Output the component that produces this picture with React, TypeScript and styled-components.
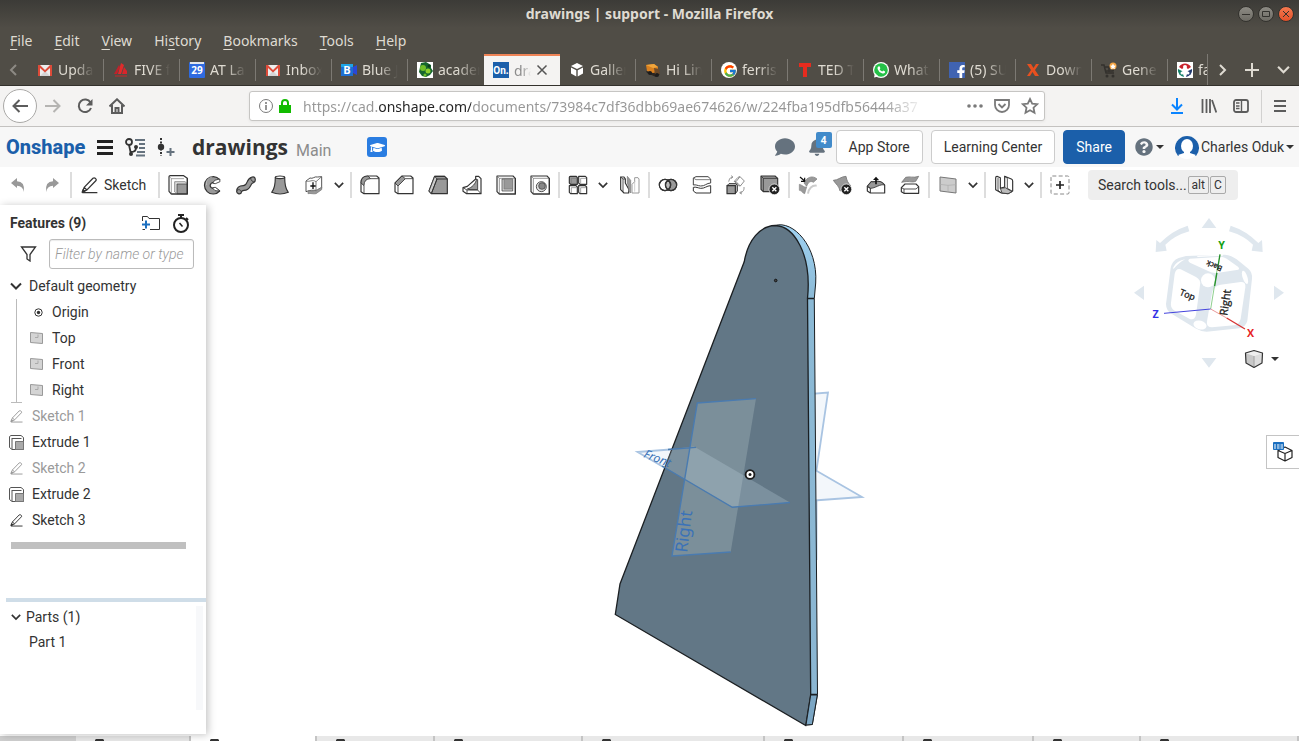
import React from 'react';
import styled, { createGlobalStyle } from 'styled-components';
import { FaBell, FaComment, FaFacebookF, FaGraduationCap, FaQuestionCircle } from 'react-icons/fa';
import { FcGoogle } from 'react-icons/fc';

const chromeFont = `'Noto Sans', 'Open Sans', sans-serif`;
const appFont = `Roboto, 'Liberation Sans', sans-serif`;

const GlobalStyle = createGlobalStyle`
  * { box-sizing: border-box; }
  body { margin: 0; background: #fff; }
  button, input { font: inherit; color: inherit; }
  button { border: 0; padding: 0; background: none; cursor: pointer; }
  svg { display: block; flex: none; }
`;

const Page = styled.div`
  display: flex;
  flex-direction: column;
  height: 100vh;
  overflow: hidden;
  font-family: ${appFont};
  font-size: 14px;
  color: #333;
`;

/* ---------- Browser window ---------- */

const BrowserFrame = styled.div`
  flex: none;
  font-family: ${chromeFont};
  font-size: 14px;
  color: #dfdbd2;
  background: linear-gradient(#3c3b37 0, #504d46 28px);
`;

const TitleBar = styled.header`
  display: grid;
  grid-template-columns: 1fr auto 1fr;
  align-items: center;
  height: 28px;
  padding: 0 5px;
`;

const WindowTitle = styled.h1`
  grid-column: 2;
  margin: 0;
  font-size: 14px;
  font-weight: 700;
  line-height: 28px;
`;

const WindowButtons = styled.div`
  display: flex;
  justify-content: flex-end;
  gap: 4px;
`;

const WindowButton = styled.button<{ $close?: boolean }>`
  display: grid;
  place-items: center;
  width: 16px;
  height: 16px;
  border: 1px solid #33322e;
  border-radius: 50%;
  color: #33322e;
  background: ${(p) => (p.$close ? 'linear-gradient(#f4794f, #e2512a)' : 'linear-gradient(#8d8b84, #6d6b64)')};
`;

const MenuBar = styled.nav`
  display: flex;
  align-items: center;
  gap: 22px;
  height: 26px;
  padding-left: 10px;
`;

const MenuButton = styled.button`
  line-height: 22px;
  u { text-underline-offset: 3px; }
`;

const TabStrip = styled.div`
  display: flex;
  height: 32px;
  border-bottom: 1px solid #33312c;
`;

const StripButton = styled.button<{ $width: number; $dim?: boolean }>`
  display: grid;
  flex: none;
  place-items: center;
  width: ${(p) => p.$width}px;
  color: ${(p) => (p.$dim ? '#8d8a84' : '#dfdbd2')};
`;

const TabList = styled.div`
  display: flex;
  flex: 1;
  min-width: 0;
  overflow: hidden;
  border-right: 1px solid #7c7973;
`;

const Tab = styled.button<{ $active?: boolean }>`
  display: flex;
  flex: none;
  align-items: center;
  gap: 5px;
  width: 76px;
  height: ${(p) => (p.$active ? '32px' : '31px')};
  padding: ${(p) => (p.$active ? '0 12px 0 9px' : '0 0 0 9px')};
  text-align: left;
  color: ${(p) => (p.$active ? '#8c8c8c' : '#dfdbd2')};
  background: ${(p) => (p.$active ? '#f4f3f2' : 'transparent')};
  box-shadow: ${(p) => (p.$active ? 'inset 0 2px #ef8457' : 'none')};
`;

const TabDivider = styled.span`
  flex: none;
  width: 1px;
  height: 22px;
  background: #7c7973;
`;

const TabLabel = styled.span<{ $active?: boolean }>`
  flex: 1;
  min-width: 0;
  overflow: hidden;
  margin-right: ${(p) => (p.$active ? 0 : 4)}px;
  white-space: nowrap;
  mask-image: linear-gradient(90deg, #000 45%, transparent 100%);
`;

const NavBar = styled.div`
  display: flex;
  align-items: center;
  height: 41px;
  padding: 0 3px;
  border-bottom: 1px solid #c4c2c0;
  color: #606060;
  background: #f4f3f2;
`;

const NavButton = styled.button<{ $accent?: boolean; $faint?: boolean }>`
  display: grid;
  place-items: center;
  width: 32px;
  height: 32px;
  color: ${(p) => (p.$accent ? '#0a84ff' : p.$faint ? '#b5b4b2' : '#5c5c5c')};
`;

const BackButton = styled(NavButton)`
  width: 34px;
  height: 34px;
  border: 1px solid #aaa9a7;
  border-radius: 50%;
  background: #fff;
`;

const AddressBar = styled.label`
  display: flex;
  flex: 1;
  align-items: center;
  gap: 5px;
  height: 30px;
  margin: 0 116px;
  padding: 0 5px 0 9px;
  border: 1px solid #c6c5c3;
  border-radius: 3px;
  color: #7a7a7a;
  background: #fff;
  box-shadow: 0 1px 3px rgba(0, 0, 0, 0.06);
`;

const AddressInput = styled.input`
  flex: 1;
  min-width: 0;
  margin-left: 6px;
  padding: 0;
  border: 0;
  outline: 0;
  font-size: 14px;
  background: linear-gradient(90deg, #969696 75px, #222 75px, #222 168px, #969696 168px, #969696 580px, transparent 622px);
  background-clip: text;
  -webkit-text-fill-color: transparent;
`;

const NavSeparator = styled.span`
  width: 1px;
  height: 33px;
  margin: 0 2px 0 4px;
  background: #d2d1d0;
`;

/* ---------- Document header ---------- */

const DocHeader = styled.header`
  display: flex;
  flex: none;
  align-items: center;
  height: 40px;
  padding: 0 5px 0 6px;
  background: #f7f7f7;
`;

const Brand = styled.a`
  width: 78px;
  font-size: 20px;
  font-weight: 800;
  line-height: 40px;
  color: #1b5faa;
  text-decoration: none;
`;

const HeaderButton = styled.button<{ $left: number; $color?: string }>`
  display: grid;
  place-items: center;
  margin-left: ${(p) => p.$left}px;
  color: ${(p) => p.$color ?? '#333'};
`;

const DocTitle = styled.h2`
  margin: 0 0 0 17px;
  font-family: 'Open Sans', sans-serif;
  font-size: 21px;
  font-weight: 700;
  line-height: 40px;
`;

const Workspace = styled.span`
  margin: 6px 0 0 8px;
  font-size: 16px;
  color: #8c8c8c;
`;

const LearnBadge = styled.button`
  display: grid;
  place-items: center;
  width: 20px;
  height: 20px;
  margin-left: 36px;
  border-radius: 3px;
  color: #fff;
  background: #2a7de1;
`;

const HeaderActions = styled.div`
  display: flex;
  align-items: center;
  margin-left: auto;
`;

const Notification = styled(HeaderButton)`
  position: relative;
  width: 17px;
  margin-right: 11px;
`;

const Count = styled.span`
  position: absolute;
  top: -6px;
  left: 8px;
  width: 16px;
  border-radius: 2px;
  font-family: 'Open Sans', sans-serif;
  font-size: 10px;
  font-weight: 700;
  line-height: 16px;
  text-align: center;
  color: #fff;
  background: #428bca;
`;

const ActionButton = styled.button<{ $primary?: boolean }>`
  height: 34px;
  margin-right: 8px;
  padding: 0 12px;
  border: 1px solid ${(p) => (p.$primary ? '#1b5faa' : '#ccc')};
  border-radius: 4px;
  color: ${(p) => (p.$primary ? '#fff' : '#333')};
  background: ${(p) => (p.$primary ? '#1b5faa' : '#fff')};
`;

const DropButton = styled.button<{ $gap: number }>`
  display: flex;
  align-items: center;
  gap: ${(p) => p.$gap}px;
  margin-left: 2px;
`;

const Caret = styled.span`
  border: 4px solid transparent;
  border-top-color: #333;
  border-bottom: 0;
`;

const AccountButton = styled(DropButton)`
  margin-left: 11px;
`;

/* ---------- Tool bar ---------- */

const ToolBar = styled.div`
  display: flex;
  flex: none;
  align-items: center;
  height: 38px;
  padding: 0 1px 2px;
  background: #fff;
`;

const ToolButton = styled.button`
  display: grid;
  place-items: center;
  width: 34px;
  height: 30px;
`;

const SketchButton = styled.button`
  display: flex;
  align-items: center;
  gap: 6px;
  width: 84px;
  height: 30px;
  padding-left: 8px;
`;

const MoreButton = styled.button`
  display: flex;
  align-items: center;
  width: 18px;
  height: 30px;
  padding-left: 3px;
`;

const ToolSeparator = styled.span`
  width: 2px;
  height: 26px;
  margin: 0 1px;
  background: #ddd;
`;

const SearchTools = styled.button`
  display: flex;
  align-items: center;
  gap: 1px;
  width: 150px;
  height: 30px;
  margin-left: 11px;
  padding-left: 10px;
  border-radius: 4px;
  background: #eee;
`;

const Key = styled.kbd`
  padding: 0 3px;
  border: 1px solid #aaa;
  border-radius: 2px;
  font-family: ${appFont};
  font-size: 12px;
  line-height: 16px;
`;

/* ---------- Model area ---------- */

const Main = styled.main`
  display: flex;
  flex: 1;
  min-height: 0;
`;

const SidePanel = styled.aside`
  z-index: 1;
  display: flex;
  flex: none;
  flex-direction: column;
  width: 206px;
  margin-bottom: 2px;
  background: #fff;
  box-shadow: 2px 1px 8px rgba(0, 0, 0, 0.24);
`;

const PanelHeader = styled.div`
  display: flex;
  align-items: center;
  gap: 10px;
  height: 34px;
  padding: 2px 16px 0 10px;
`;

const PanelTitle = styled.h3`
  flex: 1;
  margin: 0;
  font-size: 14px;
  font-weight: 700;
  line-height: 20px;
`;

const FilterRow = styled.label`
  display: flex;
  align-items: center;
  gap: 12px;
  padding: 0 12px 0 20px;
`;

const FilterInput = styled.input`
  flex: 1;
  min-width: 0;
  height: 30px;
  padding: 0 5px;
  border: 1px solid #bbb;
  border-radius: 3px;
  outline: 0;
  background: #fff;
  box-shadow: inset 0 1px 1px rgba(0, 0, 0, 0.08);
  &::placeholder { font-style: italic; font-weight: 300; color: #999; opacity: 1; }
`;

const FeatureTree = styled.div`
  flex: 1;
  min-height: 0;
  padding-top: 4px;
`;

const TreeRow = styled.button<{ $muted?: boolean; $indent?: number; $gap?: number }>`
  display: flex;
  align-items: center;
  gap: ${(p) => p.$gap ?? 8}px;
  width: 100%;
  height: 26px;
  padding-left: ${(p) => p.$indent ?? 8}px;
  text-align: left;
  color: ${(p) => (p.$muted ? '#9a9a9a' : '#333')};
`;

const IconSlot = styled.span`
  display: grid;
  place-items: center;
  width: 16px;
`;

const Branch = styled.div`
  display: flex;
  height: 104px;
`;

const BranchLine = styled.span`
  flex: none;
  width: 11px;
  height: 104px;
  margin-left: 11px;
  border-bottom: 1px solid #bbb;
  background: linear-gradient(#bbb, #bbb) 5px 0 / 1px 100% no-repeat;
`;

const BranchItems = styled.div`
  flex: 1;
`;

const RollbackBar = styled.div`
  height: 7px;
  margin: 9px 20px 0 11px;
  background: #c0c0c0;
`;

const PartsSection = styled.section`
  flex: none;
  display: flex;
  height: 136px;
  margin-left: 6px;
  padding: 4px 3px 24px 0;
  border-top: 4px solid #cfdde8;
`;

const PartsList = styled.div`
  flex: 1;
  margin-top: -2px;
`;

const PartRow = styled.button<{ $indent: number }>`
  display: flex;
  align-items: center;
  gap: 5px;
  height: 25px;
  padding-left: ${(p) => p.$indent}px;
`;

const ScrollTrack = styled.span`
  width: 7px;
  background: #f7f8fa;
`;

const Viewport = styled.section`
  position: relative;
  flex: 1;
  min-width: 0;
  background: #fff;
`;

const ModelCanvas = styled.svg`
  width: 100%;
  height: 100%;
  font-family: 'Noto Sans', sans-serif;
`;

const ViewControls = styled.div`
  position: absolute;
  top: 8px;
  right: 9px;
  display: flex;
  flex-direction: column;
  font-family: 'Open Sans', sans-serif;
`;

const DisplayButton = styled.button`
  display: flex;
  align-items: center;
  align-self: flex-end;
  gap: 7px;
  margin: -22px 11px 0 0;
`;

const TableButton = styled.button`
  position: absolute;
  top: 230px;
  right: 0;
  display: grid;
  place-items: center;
  width: 33px;
  height: 34px;
  border: 1px solid #c4c4c4;
  border-right: 0;
  background: #fff;
`;

const DocTabs = styled.nav`
  display: flex;
  flex: none;
  height: 5px;
  overflow: hidden;
  background: #e8e8e8;
`;

const DocTab = styled.button<{ $width: number; $active?: boolean }>`
  flex: 0 1 ${(p) => p.$width}px;
  display: flex;
  align-items: flex-start;
  padding: 3px 0 0 19px;
  border-right: 2px solid #c4c4c4;
  background: ${(p) => (p.$active ? '#fff' : '#e8e8e8')};
`;

const DocTabTools = styled.span`
  flex: none;
  width: 76px;
  background: #cfcfcf;
`;

/* ---------- Icons ---------- */

const Chevron = ({ dir = 'down', w = 12, sw = 2 }: { dir?: 'down' | 'left' | 'right'; w?: number; sw?: number }) => {
  const d = { down: 'M1 3.5L6 8.5L11 3.5', left: 'M8 1L3 6L8 11', right: 'M4 1L9 6L4 11' }[dir];
  return (
    <svg width={w} height={w} viewBox="0 0 12 12" fill="none" stroke="currentColor" strokeWidth={sw}>
      <path d={d} />
    </svg>
  );
};

const Fav = ({ children }: { children: React.ReactNode }) => (
  <svg width="16" height="16" viewBox="0 0 16 16">{children}</svg>
);

const favicons: Record<string, React.ReactNode> = {
  gmail: (
    <Fav>
      <rect x="1" y="3" width="14" height="11" fill="#eceded" />
      <path d="M3 14L8 9L13 14Z" fill="#d4d5d6" />
      <path d="M1 3h2l5 5 5-5h2v11h-2V6L8 10.500 3 6v8H1z" fill="#dd4b39" />
    </Fav>
  ),
  five: (
    <Fav>
      <path d="M1 12L6 3l1 2-3 7z" fill="#c2202a" />
      <path d="M5 12L8 1l3 2-3 9z" fill="#e02b2b" />
      <path d="M9 12l2-7 3 4v3z" fill="#d8252b" />
      <path d="M2 13h12v2H2z" fill="#8c3a38" />
    </Fav>
  ),
  cal: (
    <Fav>
      <rect width="16" height="16" rx="1" fill="#2f6be0" />
      <path d="M1 0h14v2H1z" fill="#e3e6ea" />
      <text x="8" y="12" fontSize="10" fontWeight="700" textAnchor="middle" fill="#fff" fontFamily="Open Sans">29</text>
    </Fav>
  ),
  blue: (
    <Fav>
      <rect y="2" width="12" height="12" fill="#1d6fd2" />
      <path d="M0 2h12v3H0z" fill="#1da5e8" />
      <path d="M12 5l4-2v10l-4-2z" fill="#2a48d8" />
      <text x="6" y="12" fontSize="11" fontWeight="700" textAnchor="middle" fill="#fff" fontFamily="Open Sans">B</text>
    </Fav>
  ),
  acad: (
    <Fav>
      <rect width="16" height="16" fill="#fff" />
      <path d="M4 1l5-1 5 3v3l2 3-3 4-4 2-4-1-3-4 1-5z" fill="#16662e" />
      <circle cx="6" cy="6" r="3" fill="#6fbe28" />
      <circle cx="11" cy="9" r="2.500" fill="#8dd02e" />
      <circle cx="8" cy="13" r="1.500" fill="#6fbe28" />
      <circle cx="12" cy="4" r="1.500" fill="#0c3d1d" />
    </Fav>
  ),
  onshape: (
    <Fav>
      <rect width="16" height="16" fill="#1b5faa" />
      <text x="8" y="12" fontSize="10" fontWeight="700" textAnchor="middle" fill="#fff" fontFamily="Roboto">On.</text>
    </Fav>
  ),
  cube: (
    <Fav>
      <path d="M8 1l6 3-6 3-6-3z M2 5.500l5.300 2.700v6.300L2 11.500z M14 5.500L8.700 8.200v6.300L14 11.500z" fill="#fff" />
    </Fav>
  ),
  truck: (
    <Fav>
      <path d="M1 3l8-1 4 3v6l-4 1-7-3z" fill="#d9801f" />
      <path d="M1 3l8-1 4 3-5 1z" fill="#f0a63c" />
      <path d="M1 9l7 2 6-1 1 2-4 3-9-4z" fill="#2a2521" />
      <path d="M9 6l5 1 1 5-5 1z" fill="#6b4a2a" />
      <circle cx="5" cy="11" r="2" fill="#1d1d1d" />
      <circle cx="12" cy="13" r="2" fill="#1d1d1d" />
    </Fav>
  ),
  google: (
    <Fav>
      <circle cx="8" cy="8" r="8" fill="#fff" />
      <FcGoogle x="2" y="2" width="12" height="12" />
    </Fav>
  ),
  ted: (
    <Fav>
      <path d="M2 1h12v4h-4v10H6V5H2z" fill="#e62b1e" />
    </Fav>
  ),
  whatsapp: (
    <Fav>
      <circle cx="8" cy="8" r="8" fill="#fff" />
      <circle cx="8" cy="8" r="6.800" fill="#25c148" />
      <path d="M1 15.500L2 11l3.500 3.500z" fill="#fff" />
      <path d="M5.300 4.500l1.200-.3.900 2-.8 1q1 1.700 2.700 2.400l1-1 1.800 1-.2 1.200q-1 1.200-3 .5Q5.500 10 4.600 7q-.4-1.600.7-2.500z" fill="#fff" />
    </Fav>
  ),
  facebook: (
    <Fav>
      <rect width="16" height="16" fill="#4063b1" />
      <FaFacebookF x="5" y="3" width="9" height="13" color="#fff" />
    </Fav>
  ),
  x: (
    <Fav>
      <path d="M2 2h4l2.500 4L11 2h3l-4 6 4 6h-4l-2.500-4L5 14H2l4-6z" fill="#e8501f" />
    </Fav>
  ),
  cart: (
    <Fav>
      <path d="M0 3h3l2 8h8M4 5h9l-1 4H5M8 5v5" fill="none" stroke="#33312d" strokeWidth="1.500" />
      <circle cx="6" cy="14" r="1.500" fill="#33312d" />
      <circle cx="12" cy="14" r="1.500" fill="#33312d" />
      <circle cx="12" cy="4" r="3.500" fill="#f4a340" />
      <path d="M12 1.500l1 2 2 .3-1.500 1.400.3 2L12 6.200l-1.800 1 .3-2L9 3.800l2-.3z" fill="#fff" />
    </Fav>
  ),
  fab: (
    <Fav>
      <rect width="16" height="16" fill="#fff" />
      <path d="M2 5a7 7 0 0 1 12 0l-3 2a4 4 0 0 0-6 0z" fill="#c8232c" />
      <path d="M1 7l4 2 2 6a7 7 0 0 1-6-8z" fill="#14806a" />
      <path d="M15 7l-4 2-2 6a7 7 0 0 0 6-8z" fill="#223b70" />
      <circle cx="8" cy="5" r="2" fill="#fff" />
      <circle cx="5" cy="11" r="1.500" fill="#fff" />
      <circle cx="11" cy="11" r="1.500" fill="#fff" />
    </Fav>
  ),
};

const Tool = ({ children, size = 20 }: { children: React.ReactNode; size?: number }) => (
  <svg width={size} height={size} viewBox="0 0 60 60" fill="none" stroke="#333" strokeWidth="3.500" strokeLinejoin="round">
    {children}
  </svg>
);

const G = '#999';

const DeleteMark = () => (
  <g>
    <circle cx="43" cy="43" r="16" fill="#222" stroke="#fff" strokeWidth="2" />
    <path d="M37 37l12 12M49 37L37 49" stroke="#fff" strokeWidth="4" />
  </g>
);

const icons: Record<string, React.ReactNode> = {
  extrude: (
    <Tool>
      <path d="M3 5q0-3 4-3h40l11 8v47H10l-7-8z" fill="#fff" />
      <path d="M10 11h38M10 11v44M10 11L4 5" strokeWidth="2" stroke="#777" />
      <path d="M20 20h31l6 5v31H25l-5-5z" fill="#ddd" strokeWidth="2" stroke="#666" />
      <path d="M27 27h30v29H27z" fill={G} strokeWidth="2" />
      <path d="M58 10v47H10" />
    </Tool>
  ),
  revolve: (
    <Tool>
      <path d="M53 14A26 26 0 1 0 53 48L40 38A9 9 0 1 1 39 24z" fill={G} />
      <path d="M53 12l-15 4-6 9 8 1 14-6zM54 48l-15-1-8-9 9-1z" fill="#fff" strokeWidth="2.500" />
      <path d="M31 6C14 10 12 20 14 30" stroke="#ccc" strokeWidth="2" />
    </Tool>
  ),
  sweep: (
    <Tool>
      <path d="M2 50C2 36 10 32 22 32C36 32 30 12 46 7C52 4 58 6 58 14C58 22 54 22 50 24C42 28 44 46 24 46C16 46 16 50 15 55C10 58 3 56 2 50z" fill={G} />
      <path d="M44 8C44 16 50 22 56 20M3 46c5-4 11-2 13 4" strokeWidth="2.500" />
    </Tool>
  ),
  loft: (
    <Tool>
      <path d="M16 7C16 28 14 42 5 52C20 58 40 58 55 52C46 42 44 28 44 7z" fill={G} />
      <ellipse cx="30" cy="7" rx="14" ry="4" fill="#fff" />
    </Tool>
  ),
  thicken: (
    <Tool>
      <path d="M6 18L18 9C26 13 32 3 40 6L53 5V40C46 38 42 46 36 46C28 46 20 44 6 50z" fill="#fff" strokeWidth="2.500" />
      <path d="M6 18C18 22 24 12 36 20L53 5M36 20v26" stroke="#666" strokeWidth="2.500" />
      <path d="M12 56V48C20 46 28 50 36 48L53 36v8L36 56C28 58 20 54 12 56z" fill={G} stroke="#777" strokeWidth="2" />
      <path d="M27 22v20M19 33h16" stroke="#111" strokeWidth="4" />
    </Tool>
  ),
  fillet: (
    <Tool>
      <path d="M3 24Q3 3 24 3H50l7 6V56H12L3 50z" fill="#fff" />
      <path d="M3 24Q3 3 24 3L32 11Q12 11 12 32z" fill={G} strokeWidth="2.500" />
      <path d="M12 32V56M32 11H57" strokeWidth="2.500" />
    </Tool>
  ),
  chamfer: (
    <Tool>
      <path d="M3 24L24 3H50l7 6V56H12L3 50z" fill="#fff" />
      <path d="M3 24L24 3L34 11L12 33z" fill={G} strokeWidth="2.500" />
      <path d="M12 33V56M34 11H57" strokeWidth="2.500" />
    </Tool>
  ),
  draft: (
    <Tool>
      <path d="M3 48L20 4H50l8 8V56H10z" fill={G} />
      <path d="M3 48L20 4L27 12L10 56z" fill="#ccc" strokeWidth="2.500" />
      <path d="M10 56L27 12H58M20 4H50" strokeWidth="3" />
    </Tool>
  ),
  rib: (
    <Tool>
      <path d="M3 38l13-4L41 12V4h9l7 7V56H14L3 49z" fill="#fff" />
      <path d="M16 42C30 38 41 26 44 12L47 14V44H24z" fill={G} strokeWidth="2.500" />
      <path d="M3 38l12 7V55M15 45h32l9 10" strokeWidth="2.500" />
    </Tool>
  ),
  shell: (
    <Tool>
      <path d="M3 3h48l7 7V57H10L3 50z" fill="#fff" />
      <path d="M10 10h48M10 10v47M10 10L3 3" strokeWidth="2" stroke="#666" />
      <path d="M18 12h32v36H18z" fill="#ccc" strokeWidth="2" />
      <path d="M24 12h26v30H24z" fill={G} stroke="#777" strokeWidth="2" />
      <path d="M58 10v47H10" />
    </Tool>
  ),
  hole: (
    <Tool>
      <path d="M3 3h48l7 7V57H10L3 50z" fill="#fff" />
      <path d="M10 10h48M10 10v47M10 10L3 3" strokeWidth="2" stroke="#666" />
      <circle cx="34" cy="35" r="15" fill="#ddd" strokeWidth="2.500" />
      <circle cx="36" cy="33" r="10" fill="#888" strokeWidth="2" />
      <path d="M58 10v47H10" />
    </Tool>
  ),
  pattern: (
    <Tool>
      <path d="M4 7q0-3 3-3h18l3 4v20H8l-4-4z" fill={G} />
      <path d="M32 4h20l4 4v20H36l-4-4zM4 32h20l4 4v20H8l-4-4zM32 32h20l4 4v20H36l-4-4z" fill="#fff" />
      <path d="M10 10h16M10 10v16M38 10h16M38 10v16M10 38h16M10 38v16M38 38h16M38 38v16" stroke="#777" strokeWidth="2" />
    </Tool>
  ),
  mirror: (
    <Tool>
      <path d="M2 6h10l4 6v12l10 18V54H12L2 44z" fill="#fff" />
      <path d="M9 12v38M2 6l7 6h7" strokeWidth="2.500" />
      <path d="M22 4l10 12v38l-6-6V36L22 24z" fill={G} stroke="#777" strokeWidth="2" />
      <path d="M36 54V28l8-8V8h10l3 4V54z" stroke={G} strokeWidth="3" />
      <path d="M44 20v30" stroke="#bbb" strokeWidth="2" />
    </Tool>
  ),
  boolean: (
    <Tool>
      <circle cx="39" cy="30" r="17" fill={G} />
      <circle cx="21" cy="30" r="17" fill="#fff" />
      <path d="M30 16a17 17 0 0 1 0 28a17 17 0 0 1 0-28z" fill="#bbb" />
      <circle cx="39" cy="30" r="17" />
      <circle cx="21" cy="30" r="17" />
    </Tool>
  ),
  split: (
    <Tool>
      <path d="M4 9l8-4H48l8 7V24C44 24 38 34 26 33C16 32 12 28 4 30z" fill="#fff" stroke="#444" strokeWidth="3" />
      <path d="M4 9l8 5H56" strokeWidth="2.500" stroke="#666" />
      <path d="M4 37c8-2 14 2 22 3c12 1 18-8 30-8V54H12L4 48z" fill="#fff" strokeWidth="3" />
    </Tool>
  ),
  transform: (
    <Tool>
      <path d="M3 32l6-6h25l-6 6zM28 32l6-6v22l-6 8z" fill="#ccc" strokeWidth="3" />
      <path d="M3 32h25v24H3z" fill={G} />
      <path d="M42 5L55 18L43 33L30 20zM42 5l-6 2-11 12 5 1M25 19l12 13 6 1" fill="#fff" stroke="#777" strokeWidth="2.500" />
      <path d="M8 20Q8 8 20 6M15 2l6 4-5 5" stroke={G} strokeWidth="3" />
      <path d="M54 36Q56 50 42 54M47 48l-6 6 7 3" stroke={G} strokeWidth="3" />
    </Tool>
  ),
  deletePart: (
    <Tool>
      <path d="M3 3h42l8 7V50H10L3 43z" fill={G} />
      <path d="M10 10h43M10 10v40M10 10L3 3" strokeWidth="2.500" />
      <DeleteMark />
    </Tool>
  ),
  modifyFillet: (
    <Tool>
      <path d="M18 24C26 6 44 0 57 12L46 22C38 16 30 22 26 34z" fill={G} stroke="#777" strokeWidth="2" />
      <path d="M30 56C32 40 42 30 56 32" stroke="#ccc" strokeWidth="6" />
      <path d="M4 28C14 30 16 38 26 36L20 56C14 56 12 46 4 46z" fill={G} stroke="#888" strokeWidth="2" />
      <path d="M6 6l14 12M20 8v11H9" stroke="#111" strokeWidth="3.500" />
    </Tool>
  ),
  deleteFace: (
    <Tool>
      <path d="M4 16C18 16 28 4 42 4C44 16 48 24 56 32C42 30 36 44 24 48C22 34 12 28 4 16z" fill={G} stroke="#777" strokeWidth="2.500" />
      <DeleteMark />
    </Tool>
  ),
  moveFace: (
    <Tool>
      <path d="M4 34L16 20C26 24 40 10 56 30V54H13L4 48z" fill="#fff" />
      <path d="M4 34L16 20C26 24 40 10 56 30C42 26 28 40 13 40z" fill={G} strokeWidth="2.500" />
      <path d="M4 34l9 6v14" strokeWidth="3" />
      <path d="M30 28V10" stroke="#111" strokeWidth="5" />
      <path d="M21 15l9-10 9 10z" fill="#111" stroke="none" />
    </Tool>
  ),
  replaceFace: (
    <Tool>
      <path d="M5 22L17 7C30 3 38 10 56 4L47 19C34 24 26 16 5 22z" fill={G} stroke="#777" strokeWidth="2.500" />
      <path d="M4 38L15 27H48l8 8V55H12L4 50z" fill="#fff" />
      <path d="M4 38l8 4H48l8-7M12 42v13" strokeWidth="2.500" />
    </Tool>
  ),
  plane: (
    <Tool>
      <path d="M6 6L54 12V54L6 48z" fill="#ccc" stroke="#777" strokeWidth="3" />
      <path d="M6 28l24 3 24-2M30 31v20" stroke="#aaa" strokeWidth="2" />
    </Tool>
  ),
  frame: (
    <Tool>
      <path d="M5 8q0-4 4-4l10 4v32L32 36V4l20 8q4 2 4 6V48L42 56L22 54L5 44z" fill="#fff" />
      <path d="M19 40L34 38L54 50L42 56L24 54z" fill="#bbb" strokeWidth="2.500" />
      <path d="M12 8v38l10 8M32 4l8 6v30L54 48" strokeWidth="2.500" />
    </Tool>
  ),
  add: (
    <Tool>
      <rect x="3" y="3" width="54" height="54" rx="4" stroke="#888" strokeWidth="3" strokeDasharray="12 7" />
      <path d="M30 18v24M18 30h24" stroke="#222" strokeWidth="5" />
    </Tool>
  ),
};

const Pencil = ({ size = 18 }: { size?: number }) => (
  <svg width={size} height={size} viewBox="0 0 54 54" fill="none" stroke="currentColor" strokeWidth="4" strokeLinejoin="round">
    <path d="M4 48L10 33L38 4q4-3 7 0l2 2q3 3 0 6L19 41zM10 33l9 8" />
    <path d="M4 48l3-8 5 5zM4 50h48" fill="currentColor" />
  </svg>
);

const PlaneGlyph = () => (
  <svg width="13" height="12" viewBox="0 0 13 12">
    <path d="M.5 .5L12.500 1.500V11.500L.5 10.500z" fill="#d4d4d4" stroke="#999" />
    <path d="M5 5.500h3v-3" fill="none" stroke="#aaa" />
  </svg>
);

const ExtrudeGlyph = () => (
  <svg width="15" height="15" viewBox="0 0 15 15" fill="none" stroke="#555">
    <path d="M.5 1.500L2 .5h10l2.500 2v12H3l-2.500-2z" fill="#fff" />
    <path d="M3 3.500h9.500M3 3v11" />
    <path d="M6.500 6.500h8v8h-8z" fill="#aaa" stroke="#777" />
  </svg>
);

const OriginGlyph = () => (
  <svg width="9" height="9" viewBox="0 0 9 9">
    <circle cx="4.500" cy="4.500" r="3.700" fill="none" stroke="#333" />
    <circle cx="4.500" cy="4.500" r="1.700" fill="#333" />
  </svg>
);

/* ---------- Content ---------- */

const tabs = [
  ['gmail', 'Updates'], ['five', 'FIVE fee'], ['cal', 'AT Lab'], ['gmail', 'Inbox (3)'], ['blue', 'Blue Jeans'],
  ['acad', 'academy'], ['onshape', 'drawings'], ['cube', 'Gallery'], ['truck', 'Hi Link'], ['google', 'ferris wh'],
  ['ted', 'TED Talk'], ['whatsapp', 'WhatsApp'], ['facebook', '(5) SUSE'], ['x', 'Download'], ['cart', 'General'], ['fab', 'fab'],
];

const menus = ['File', 'Edit', 'View', 'History', 'Bookmarks', 'Tools', 'Help'];

const toolGroups: { name: string; more?: boolean }[][] = [
  [{ name: 'extrude' }, { name: 'revolve' }, { name: 'sweep' }, { name: 'loft' }, { name: 'thicken', more: true }],
  [{ name: 'fillet' }, { name: 'chamfer' }, { name: 'draft' }, { name: 'rib' }, { name: 'shell' }, { name: 'hole' }],
  [{ name: 'pattern', more: true }, { name: 'mirror' }],
  [{ name: 'boolean' }, { name: 'split' }, { name: 'transform' }, { name: 'deletePart' }],
  [{ name: 'modifyFillet' }, { name: 'deleteFace' }, { name: 'moveFace' }, { name: 'replaceFace' }],
  [{ name: 'plane', more: true }],
  [{ name: 'frame', more: true }],
  [{ name: 'add' }],
];

const features = [
  { name: 'Sketch 1', kind: 'sketch', muted: true },
  { name: 'Extrude 1', kind: 'extrude' },
  { name: 'Sketch 2', kind: 'sketch', muted: true },
  { name: 'Extrude 2', kind: 'extrude' },
  { name: 'Sketch 3', kind: 'sketch' },
];

const docTabs = [115, 126, 118, 148, 182, 139, 130, 107, 158];

const Browser = () => (
  <BrowserFrame>
    <TitleBar>
      <WindowTitle>drawings | support - Mozilla Firefox</WindowTitle>
      <WindowButtons>
        <WindowButton aria-label="Minimize">
          <svg width="8" height="8" viewBox="0 0 8 8" stroke="currentColor"><path d="M0 4.500h8" /></svg>
        </WindowButton>
        <WindowButton aria-label="Maximize">
          <svg width="8" height="8" viewBox="0 0 8 8" stroke="currentColor" fill="none"><path d="M.5 1.500h7v5h-7z" /></svg>
        </WindowButton>
        <WindowButton aria-label="Close" $close>
          <svg width="8" height="8" viewBox="0 0 8 8" stroke="currentColor"><path d="M1 1l6 6M7 1L1 7" /></svg>
        </WindowButton>
      </WindowButtons>
    </TitleBar>
    <MenuBar>
      {menus.map((m) => {
        const at = m === 'History' ? 2 : 0;
        return (
          <MenuButton key={m}>
            {m.slice(0, at)}<u>{m[at]}</u>{m.slice(at + 1)}
          </MenuButton>
        );
      })}
    </MenuBar>
    <TabStrip>
      <StripButton $width={28} $dim aria-label="Scroll tabs left"><Chevron dir="left" /></StripButton>
      <TabList>
        {tabs.map(([icon, label], i) => {
          const active = icon === 'onshape';
          return (
            <Tab key={i} $active={active}>
              {favicons[icon]}
              <TabLabel $active={active}>{label}</TabLabel>
              {active ? (
                <svg width="12" height="12" viewBox="0 0 12 12" stroke="#555" strokeWidth="1.500"><path d="M1.500 1.500l9 9M10.500 1.500l-9 9" /></svg>
              ) : (
                icon !== 'acad' && <TabDivider />
              )}
            </Tab>
          );
        })}
      </TabList>
      <StripButton $width={28} aria-label="Scroll tabs right"><Chevron dir="right" /></StripButton>
      <StripButton $width={31} aria-label="New tab">
        <svg width="14" height="14" viewBox="0 0 14 14" stroke="currentColor" strokeWidth="2"><path d="M7 0v14M0 7h14" /></svg>
      </StripButton>
      <StripButton $width={32} aria-label="List all tabs"><Chevron w={13} /></StripButton>
    </TabStrip>
    <NavBar>
      <BackButton aria-label="Back">
        <svg width="16" height="14" viewBox="0 0 16 14" fill="none" stroke="currentColor" strokeWidth="2"><path d="M16 7H1.500M7.500 1l-6 6 6 6" /></svg>
      </BackButton>
      <NavButton $faint aria-label="Forward">
        <svg width="16" height="14" viewBox="0 0 16 14" fill="none" stroke="currentColor" strokeWidth="2"><path d="M0 7h14.500M8.500 1l6 6-6 6" /></svg>
      </NavButton>
      <NavButton aria-label="Reload">
        <svg width="16" height="16" viewBox="0 0 16 16" fill="none" stroke="currentColor" strokeWidth="2"><path d="M13.500 4.500A6.300 6.300 0 1 0 14 10" /><path d="M15.500 1v6.500H9z" fill="currentColor" stroke="none" /></svg>
      </NavButton>
      <NavButton aria-label="Home">
        <svg width="16" height="16" viewBox="0 0 16 16" fill="none" stroke="currentColor" strokeWidth="2"><path d="M.5 8.500L8 1.300l7.500 7.200M3 7v8h10V7" /><path d="M6.500 15v-5h3v5" /></svg>
      </NavButton>
      <AddressBar>
        <svg width="14" height="14" viewBox="0 0 14 14" fill="none" stroke="currentColor"><circle cx="7" cy="7" r="6.500" /><path d="M7 6v5M7 3v2" strokeWidth="1.600" /></svg>
        <svg width="14" height="14" viewBox="0 0 14 14"><path d="M1 6h12v8H1z" fill="#12bc00" /><path d="M4 7V4a3 3 0 0 1 6 0v3" fill="none" stroke="#12bc00" strokeWidth="2" /></svg>
        <AddressInput aria-label="Address" readOnly value="https://cad.onshape.com/documents/73984c7df36dbb69ae674626/w/224fba195dfb56444a37" />
        <svg width="16" height="16" viewBox="0 0 16 16" fill="currentColor"><circle cx="2" cy="8" r="1.800" /><circle cx="8" cy="8" r="1.800" /><circle cx="14" cy="8" r="1.800" /></svg>
        <svg width="28" height="16" viewBox="-7 0 28 16" fill="none" stroke="currentColor" strokeWidth="1.800"><path d="M0 2h14v5a7 7 0 0 1-14 0zM3.500 6L7 9.500 10.500 6" /></svg>
        <svg width="18" height="18" viewBox="0 0 18 18" fill="none" stroke="currentColor" strokeWidth="1.800"><path d="M9 2l2.200 4.600 5 .6-3.700 3.500 1 5L9 13.200l-4.500 2.500 1-5L1.800 7.200l5-.6z" /></svg>
      </AddressBar>
      <NavButton $accent aria-label="Downloads">
        <svg width="14" height="16" viewBox="0 0 14 16" fill="none" stroke="currentColor" strokeWidth="2"><path d="M7 0v11M2 6.500l5 5 5-5M1 15h12" /></svg>
      </NavButton>
      <NavButton aria-label="Library">
        <svg width="16" height="14" viewBox="0 0 16 14" fill="none" stroke="currentColor" strokeWidth="1.800"><path d="M1.500 0v14M5.500 0v14M9 0v14M11 1l4.300 12.500" /></svg>
      </NavButton>
      <NavButton aria-label="Sidebars">
        <svg width="16" height="14" viewBox="0 0 16 14" fill="none" stroke="currentColor" strokeWidth="1.800"><rect x="1" y="1" width="14" height="12" rx="2" /><path d="M8.500 1v12M3 4h3.500M3 7h3.500M3 9.500h3.500" strokeWidth="1.400" /></svg>
      </NavButton>
      <NavSeparator />
      <NavButton aria-label="Menu">
        <svg width="12" height="12" viewBox="0 0 12 12" stroke="currentColor" strokeWidth="2"><path d="M0 1h12M0 6h12M0 11h12" /></svg>
      </NavButton>
    </NavBar>
  </BrowserFrame>
);

const Header = () => (
  <DocHeader>
    <Brand href="#">Onshape</Brand>
    <HeaderButton $left={13} aria-label="Document menu">
      <svg width="16" height="15" viewBox="0 0 16 15" fill="#222"><path d="M0 0h16v3H0zM0 6h16v3H0zM0 12h16v3H0z" /></svg>
    </HeaderButton>
    <HeaderButton $left={12} aria-label="Versions and history">
      <svg width="20" height="20" viewBox="0 0 20 20" fill="none" stroke="#333" strokeWidth="1.800">
        <circle cx="4" cy="5" r="3" /><path d="M4 8l2 9M6 15q5 0 5-4" /><circle cx="6" cy="17" r="2" fill="#333" stroke="none" /><circle cx="11" cy="10" r="2" fill="#333" stroke="none" />
        <path d="M10 3h10M14 7h6M14 11h6M12 15h8M11 18.500h9" stroke="#65727e" />
      </svg>
    </HeaderButton>
    <HeaderButton $left={12} aria-label="Create version">
      <svg width="18" height="20" viewBox="0 0 18 20" fill="none" stroke="#333">
        <path d="M4 1v18" strokeWidth="2" strokeDasharray="2 1.500" /><circle cx="4" cy="10" r="3.200" fill="#333" stroke="none" /><path d="M13.500 11v8M9.500 15h8" stroke="#65727e" strokeWidth="2" />
      </svg>
    </HeaderButton>
    <DocTitle>drawings</DocTitle>
    <Workspace>Main</Workspace>
    <LearnBadge aria-label="Learn"><FaGraduationCap size={15} /></LearnBadge>
    <HeaderActions>
      <HeaderButton $left={0} $color="#65727e" aria-label="Comments"><FaComment size={20} /></HeaderButton>
      <Notification $left={13} $color="#65727e" aria-label="Notifications"><FaBell size={18} /><Count>4</Count></Notification>
      <ActionButton>App Store</ActionButton>
      <ActionButton>Learning Center</ActionButton>
      <ActionButton $primary>Share</ActionButton>
      <DropButton $gap={3} aria-label="Help"><FaQuestionCircle size={18} color="#65727e" /><Caret /></DropButton>
      <AccountButton $gap={2}>
        <svg width="24" height="24" viewBox="0 0 24 24"><path d="M3 21a12 12 0 1 1 18 0z" fill="#1b5faa" /><ellipse cx="12" cy="11" rx="6" ry="7" fill="#fff" /><path d="M9 15h6v3l6 2q-4 4-9 4t-9-4l6-2z" fill="#fff" /></svg>
        Charles Oduk
        <Caret />
      </AccountButton>
    </HeaderActions>
  </DocHeader>
);

const Tools = () => (
  <ToolBar>
    <ToolButton aria-label="Undo">
      <svg width="14" height="14" viewBox="0 0 14 14" fill={G}><path d="M0 5l6-5v3.300q8 0 7 10.700q-1-6-7-6.300V10z" /></svg>
    </ToolButton>
    <ToolButton aria-label="Redo">
      <svg width="14" height="14" viewBox="0 0 14 14" fill={G}><path d="M14 5L8 0v3.300q-8 0-7 10.700q1-6 7-6.300V10z" /></svg>
    </ToolButton>
    <ToolSeparator />
    <SketchButton><Pencil size={17} />Sketch</SketchButton>
    {toolGroups.map((group, i) => (
      <React.Fragment key={i}>
        <ToolSeparator />
        {group.map((t) => (
          <React.Fragment key={t.name}>
            <ToolButton aria-label={t.name}>{icons[t.name]}</ToolButton>
            {t.more && <MoreButton aria-label={`More ${t.name} tools`}><Chevron w={10} /></MoreButton>}
          </React.Fragment>
        ))}
      </React.Fragment>
    ))}
    <SearchTools>Search tools...<Key>alt</Key><Key>C</Key></SearchTools>
  </ToolBar>
);

const Sidebar = () => (
  <SidePanel>
    <PanelHeader>
      <PanelTitle>Features (9)</PanelTitle>
      <HeaderButton $left={0} aria-label="New folder">
        <svg width="19" height="16" viewBox="0 0 19 16" fill="none" stroke="#333"><path d="M1.500 6V1.500h5l1.500 2h10.500v11H9M1.500 14.500H4" /><path d="M5 5.500v8M1 9.500h8" stroke="#1b6fc0" strokeWidth="2" /></svg>
      </HeaderButton>
      <HeaderButton $left={2} aria-label="Regeneration times">
        <svg width="18" height="19" viewBox="0 0 18 19" fill="none" stroke="#222" strokeWidth="2"><circle cx="9" cy="11" r="7" /><path d="M6 1h6M9 1v3M14 4l2 2" /><path d="M7.500 9l3 3.500" strokeWidth="1.500" /></svg>
      </HeaderButton>
    </PanelHeader>
    <FilterRow>
      <svg width="17" height="16" viewBox="0 0 17 16" fill="none" stroke="#333" strokeWidth="1.300"><path d="M1.500 1h14L10 8.500V15l-3-2V8.500z" /></svg>
      <FilterInput aria-label="Filter features" placeholder="Filter by name or type" />
    </FilterRow>
    <FeatureTree>
      <TreeRow $indent={10} $gap={7}><Chevron />Default geometry</TreeRow>
      <Branch>
        <BranchLine />
        <BranchItems>
          <TreeRow $gap={6}><IconSlot><OriginGlyph /></IconSlot>Origin</TreeRow>
          {['Top', 'Front', 'Right'].map((n) => (
            <TreeRow key={n} $indent={6}><IconSlot><PlaneGlyph /></IconSlot>{n}</TreeRow>
          ))}
        </BranchItems>
      </Branch>
      {features.map((f) => (
        <TreeRow key={f.name} $muted={f.muted}>
          <IconSlot>{f.kind === 'sketch' ? <Pencil size={13} /> : <ExtrudeGlyph />}</IconSlot>
          {f.name}
        </TreeRow>
      ))}
      <RollbackBar />
    </FeatureTree>
    <PartsSection>
      <PartsList>
        <PartRow $indent={5}><Chevron w={10} />Parts (1)</PartRow>
        <PartRow $indent={23}>Part 1</PartRow>
      </PartsList>
      <ScrollTrack />
    </PartsSection>
  </SidePanel>
);

const Model = () => (
  <ModelCanvas viewBox="206 205 1093 531">
    <defs>
      <linearGradient id="rim" x1="0" y1="0" x2="0" y2="1">
        <stop offset="0" stopColor="#9fd2f2" />
        <stop offset="0.150" stopColor="#8bb9d5" />
        <stop offset="1" stopColor="#8bb6d2" />
      </linearGradient>
    </defs>
    <g fill="#f3f7fb" stroke="#a9c4e2" strokeWidth="1.800">
      <path d="M760 398L828 392.500L816.500 470V560" />
      <path d="M770 444L862 497L780 503" />
      <path d="M696 447.500L637.500 452L732 507z" />
    </g>
    <path d="M775 225.500C793 220 818 246 815.700 283L814.300 298.500L817.500 694.500L812.300 724.500L805.700 725L790 300z" fill="url(#rim)" stroke="#1b1f22" />
    <path d="M744.300 261.500C748 240 760 226 775 225.500C794 226 812 254 807.500 298.500L810.700 694.500L805.700 725.500L615.300 614.500L620 584z" fill="#627786" stroke="#1b1f22" strokeWidth="1.300" />
    <path d="M807.500 298.500H814.300M810.700 694.500H817.500" stroke="#1b1f22" strokeWidth="1.400" />
    <path d="M810.700 695L817.300 695L812.300 724.500L806 725z" fill="#7ba6c4" stroke="#1b1f22" />
    <circle cx="775.700" cy="280.500" r="1.300" fill="#444" stroke="#111" />
    <path d="M697.300 403L756 398.600L730.700 552L672 556z" fill="#c9d6d8" fillOpacity="0.250" />
    <path d="M694 446.500L790 502.500L732.300 507L664 467L672 449z" fill="#c9dbe8" fillOpacity="0.250" />
    <path d="M756 398.600L697.300 403L672 556L730.700 552M668 449.500L696 447.400M662 466L732.300 507.300L790 502.500" fill="none" stroke="#4a7bb0" strokeWidth="1.400" />
    <text transform="translate(687 553) rotate(-83)" fontSize="17" fill="#3a72b8">Right</text>
    <text transform="translate(643 457) rotate(22)" fontSize="12" fontStyle="italic" fill="#3a72b8">Front</text>
    <circle cx="750" cy="474.500" r="4.400" fill="#fff" stroke="#1b1b1b" strokeWidth="1.800" />
    <circle cx="750" cy="474.500" r="1.500" fill="#1b1b1b" />
  </ModelCanvas>
);

const ViewCube = () => (
  <svg width="160" height="158" viewBox="60 39 480 474">
    <g fill="#dfe7ee">
      <path d="M297 54L319 84H275zM297 503L275 474H319zM72 278L102 257V300zM522 278L492 257V300z" />
      <path d="M233 77L238 94Q195 106 166 134L170 152L137 156L139 120L150 129Q186 92 233 77z" />
      <path d="M362 77L357 94Q400 106 429 134L425 152L458 156L456 120L445 129Q409 92 362 77z" />
      <path d="M228 168L345 164Q365 166 380 178L415 206Q428 218 426 236L412 362Q408 380 388 385L290 395Q272 395 256 385L186 342Q168 332 168 312L182 204Q186 182 206 174z" />
    </g>
    <g fill="#fff">
      <path d="M240 176L334 170Q342 171 350 176L384 200Q392 208 380 210L320 219Q306 220 296 214L240 188Q230 180 240 176z" />
      <path d="M212 208L258 231Q274 240 270 256L258 344Q254 362 238 356L194 332Q180 324 183 308L194 222Q198 204 212 208z" />
      <path d="M332 254L392 246Q408 245 406 262L392 356Q388 374 372 376L306 382Q288 382 291 364L306 278Q310 258 332 254z" />
      <ellipse cx="294" cy="241" rx="21" ry="21" />
      <ellipse cx="270" cy="375" rx="20" ry="13" transform="rotate(15 270 375)" />
      <ellipse cx="405" cy="232" rx="7" ry="21" transform="rotate(-18 405 232)" />
      <path d="M190 202Q200 182 226 178Q206 188 190 208z" />
      <path d="M262 168L340 163 338 167 262 171z" />
    </g>
    <g fill="none" strokeWidth="3">
      <path d="M302 327L322 205" stroke="#8fd08f" />
      <path d="M314 258L330 163" stroke="#27912b" strokeWidth="4" strokeDasharray="40 10 60" />
      <path d="M302 327L162 340" stroke="#4343dd" />
      <path d="M302 327L350 354" stroke="#eb9a9a" />
      <path d="M350 354L405 387" stroke="#d63333" strokeWidth="4" />
    </g>
    <g fill="#222" stroke="#222">
      <text transform="translate(207 284) rotate(22)" fontSize="27">Top</text>
      <text transform="translate(352 348) rotate(-82)" fontSize="33">Right</text>
      <text transform="translate(338 200) rotate(203)" fontSize="22">Back</text>
    </g>
    <g fontSize="32" fontWeight="700" textAnchor="middle">
      <text x="335" y="146" fill="#12a012">Y</text>
      <text x="137" y="353" fill="#3232e6">Z</text>
      <text x="422" y="411" fill="#e62222">X</text>
    </g>
  </svg>
);

export default function App() {
  return (
    <Page>
      <GlobalStyle />
      <Browser />
      <Header />
      <Tools />
      <Main>
        <Sidebar />
        <Viewport>
          <Model />
          <ViewControls>
            <ViewCube />
            <DisplayButton aria-label="Display style">
              <svg width="20" height="20" viewBox="0 0 20 20" stroke="#333" strokeWidth="1.200" strokeLinejoin="round">
                <path d="M1.500 4L10 1.500 18.500 4 10 7z" fill="#eee" stroke="none" />
                <path d="M1.500 4L10 7v11.500L2 14z" fill="#c8c8c8" stroke="none" />
                <path d="M18.500 4L10 7v11.500L18 14z" fill="#ddd" stroke="none" />
                <path d="M10 7v11" stroke="#aaa" />
                <path d="M1.500 4L10 1.500 18.500 4 18 14l-8 4.500L2 14z" fill="none" />
              </svg>
              <Caret />
            </DisplayButton>
          </ViewControls>
          <TableButton aria-label="Tables">
            <svg width="20" height="20" viewBox="0 0 20 20" fill="none" stroke="#222" strokeLinejoin="round">
              <path d="M5 8.500L12 5l7 3.500v7L12 19l-7-3.500zM5 8.500l7 3 7-3M12 11.500V19" strokeWidth="1.200" />
              <path d="M.5 .5h10v7H.5z" fill="#8db8e0" stroke="#1b6fc0" /><path d="M.5 1.500h10M3.500 .5v7M7 .5v7" stroke="#1b6fc0" />
            </svg>
          </TableButton>
        </Viewport>
      </Main>
      <DocTabs>
        <DocTabTools />
        {docTabs.map((w, i) => (
          <DocTab key={i} $width={w} $active={i === 1} aria-label={`Document tab ${i + 1}`}>
            <svg width="9" height="9" viewBox="0 0 9 9" fill="#333"><path d="M1 0h7l1 1v8H0V1z" /></svg>
          </DocTab>
        ))}
      </DocTabs>
    </Page>
  );
}
